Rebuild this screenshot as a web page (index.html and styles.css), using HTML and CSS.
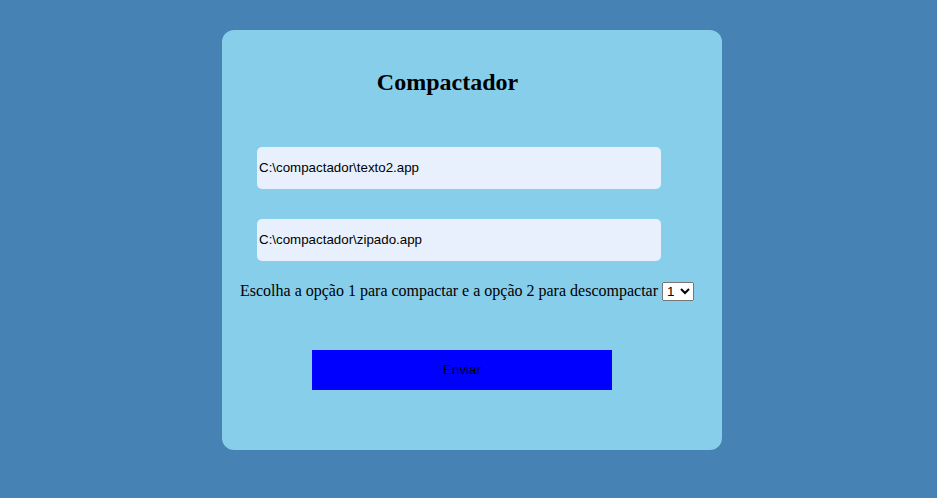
FILE: index.html
```html
<!DOCTYPE html>
<html lang="pt">
<head>
<meta charset="utf-8">
<title>Compactador</title>
<link rel="stylesheet" href="styles.css">
</head>
<body>
<main class="card">
  <h1 class="title">Compactador</h1>
  <input class="field field-first" type="text" value="C:\compactador\texto2.app">
  <input class="field field-second" type="text" value="C:\compactador\zipado.app">
  <div class="choice">
    <label for="op">Escolha a opção 1 para compactar e a opção 2 para descompactar</label>
    <select id="op" class="select"><option>1</option><option>2</option></select>
  </div>
  <button class="send" type="button">Enviar</button>
</main>
</body>
</html>
```
FILE: styles.css
```css
html, body {
  margin: 0;
  padding: 0;
}
body {
  background: #4682b4;
  font-family: "Liberation Serif", "Times New Roman", serif;
  width: 937px;
  height: 498px;
  padding-top: 30px;
  box-sizing: border-box;
}
.card {
  width: 500px;
  height: 420px;
  margin: 0 0 0 222px;
  background: #87ceeb;
  border-radius: 12px;
  display: flex;
  flex-direction: column;
  box-sizing: border-box;
}
.title {
  margin: 38px 49px 0 0;
  text-align: center;
  font-size: 24px;
  line-height: 28px;
  font-weight: bold;
  color: #000;
}
.field {
  width: 404px;
  height: 42px;
  margin-left: 35px;
  border: none;
  border-radius: 5px;
  background: #e8f0fe;
  font-family: "Liberation Sans", Arial, sans-serif;
  font-size: 13.333px;
  color: #000;
  padding: 0 2px 1px;
  box-sizing: border-box;
  outline: none;
}
.field-first {
  margin-top: 51px;
}
.field-second {
  margin-top: 30px;
}
.choice {
  margin-top: 20px;
  text-align: center;
  font-size: 16px;
  line-height: 20px;
  color: #000;
  padding-right: 10px;
}
.select {
  font-family: "Liberation Sans", Arial, sans-serif;
  font-size: 13.333px;
  height: 19px;
  width: 32px;
  vertical-align: baseline;
}
.send {
  margin: 49px 0 0 90px;
  width: 300px;
  height: 40px;
  background: #0000ff;
  border: none;
  color: #000;
  font-family: "Liberation Sans", Arial, sans-serif;
  font-size: 13.333px;
  padding-bottom: 2px;
}
```
